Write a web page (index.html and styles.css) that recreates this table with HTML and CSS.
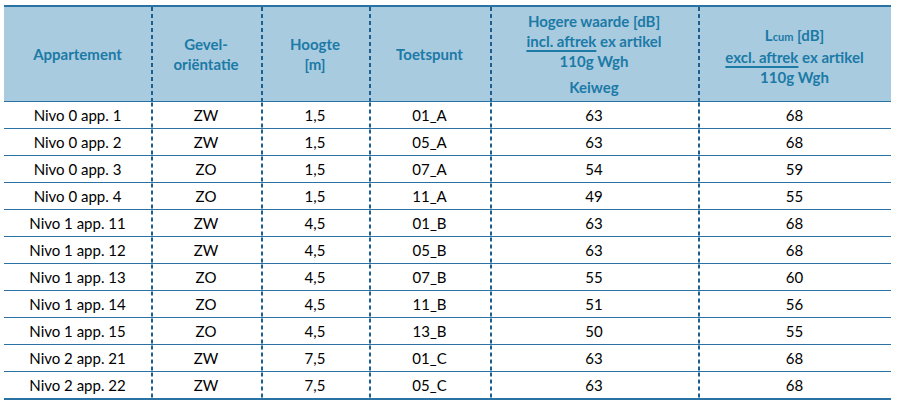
FILE: index.html
```html
<!DOCTYPE html>
<html lang="nl">
<head>
<meta charset="utf-8">
<title>Tabel</title>
<link rel="stylesheet" href="styles.css">
</head>
<body>
<div class="wrap">
<table class="tbl">
  <colgroup>
    <col class="c1"><col class="c2"><col class="c3"><col class="c4"><col class="c5"><col class="c6">
  </colgroup>
  <thead>
    <tr>
      <th>Appartement</th>
      <th class="dl">Gevel-<br>oriëntatie</th>
      <th class="dl">Hoogte<br>[m]</th>
      <th class="dl">Toetspunt</th>
      <th class="dl"><div class="ln">Hogere waarde [dB]</div><div class="ln"><span class="u">incl. aftrek</span> ex artikel</div><div class="ln">110g Wgh</div><div class="ln kw">Keiweg</div></th>
      <th class="dl"><div class="ln lc">L<span class="sm">cum</span> [dB]</div><div class="ln"><span class="u">excl. aftrek</span> ex artikel</div><div class="ln">110g Wgh</div></th>
    </tr>
  </thead>
  <tbody>
    <tr><td>Nivo 0 app. 1</td><td class="dl">ZW</td><td class="dl">1,5</td><td class="dl">01_A</td><td class="dl">63</td><td class="dl">68</td></tr>
    <tr><td>Nivo 0 app. 2</td><td class="dl">ZW</td><td class="dl">1,5</td><td class="dl">05_A</td><td class="dl">63</td><td class="dl">68</td></tr>
    <tr><td>Nivo 0 app. 3</td><td class="dl">ZO</td><td class="dl">1,5</td><td class="dl">07_A</td><td class="dl">54</td><td class="dl">59</td></tr>
    <tr><td>Nivo 0 app. 4</td><td class="dl">ZO</td><td class="dl">1,5</td><td class="dl">11_A</td><td class="dl">49</td><td class="dl">55</td></tr>
    <tr><td>Nivo 1 app. 11</td><td class="dl">ZW</td><td class="dl">4,5</td><td class="dl">01_B</td><td class="dl">63</td><td class="dl">68</td></tr>
    <tr><td>Nivo 1 app. 12</td><td class="dl">ZW</td><td class="dl">4,5</td><td class="dl">05_B</td><td class="dl">63</td><td class="dl">68</td></tr>
    <tr><td>Nivo 1 app. 13</td><td class="dl">ZO</td><td class="dl">4,5</td><td class="dl">07_B</td><td class="dl">55</td><td class="dl">60</td></tr>
    <tr><td>Nivo 1 app. 14</td><td class="dl">ZO</td><td class="dl">4,5</td><td class="dl">11_B</td><td class="dl">51</td><td class="dl">56</td></tr>
    <tr><td>Nivo 1 app. 15</td><td class="dl">ZO</td><td class="dl">4,5</td><td class="dl">13_B</td><td class="dl">50</td><td class="dl">55</td></tr>
    <tr><td>Nivo 2 app. 21</td><td class="dl">ZW</td><td class="dl">7,5</td><td class="dl">01_C</td><td class="dl">63</td><td class="dl">68</td></tr>
    <tr><td>Nivo 2 app. 22</td><td class="dl">ZW</td><td class="dl">7,5</td><td class="dl">05_C</td><td class="dl">63</td><td class="dl">68</td></tr>
  </tbody>
</table>
</div>
</body>
</html>
```
FILE: styles.css
```css
html, body {
  margin: 0;
  padding: 0;
  background: #ffffff;
}
.wrap {
  padding: 5px 0 0 4px;
}
.tbl {
  border-collapse: collapse;
  table-layout: fixed;
  width: 887px;
  font-family: Lato, "Liberation Sans", sans-serif;
  font-size: 15px;
  color: #000;
}
.c1 { width: 147px; }
.c2 { width: 110px; }
.c3 { width: 108px; }
.c4 { width: 121px; }
.c5 { width: 208px; }
.c6 { width: 193px; }
.tbl th {
  background-color: #a9cbe0;
  color: #1b7aa6;
  font-weight: bold;
  font-size: 15px;
  height: 94px;
  padding: 0 2px;
  line-height: 20px;
  text-align: center;
  vertical-align: middle;
  border-top: 2px solid #2a72a3;
  border-bottom: 1px solid #2a72a3;
}
.tbl td {
  height: 26px;
  padding: 0 4px;
  text-align: center;
  vertical-align: middle;
  border-bottom: 1px solid #2a72a3;
  line-height: 20px;
}
.tbl tbody tr:last-child td {
  border-bottom: 2px solid #2a72a3;
}
.dl {
  background-image: linear-gradient(to bottom, #1d5f8e 4px, transparent 4px);
  background-size: 2px 7px;
  background-repeat: repeat-y;
  background-position: 0 0;
}
.ln { white-space: nowrap; }
.kw { margin-top: 6px; }
.lc { margin-top: 4px; }
.u {
  text-decoration: underline;
  text-decoration-thickness: 1.5px;
  text-underline-offset: 3px;
}
.sm {
  font-size: 11px;
}
```
